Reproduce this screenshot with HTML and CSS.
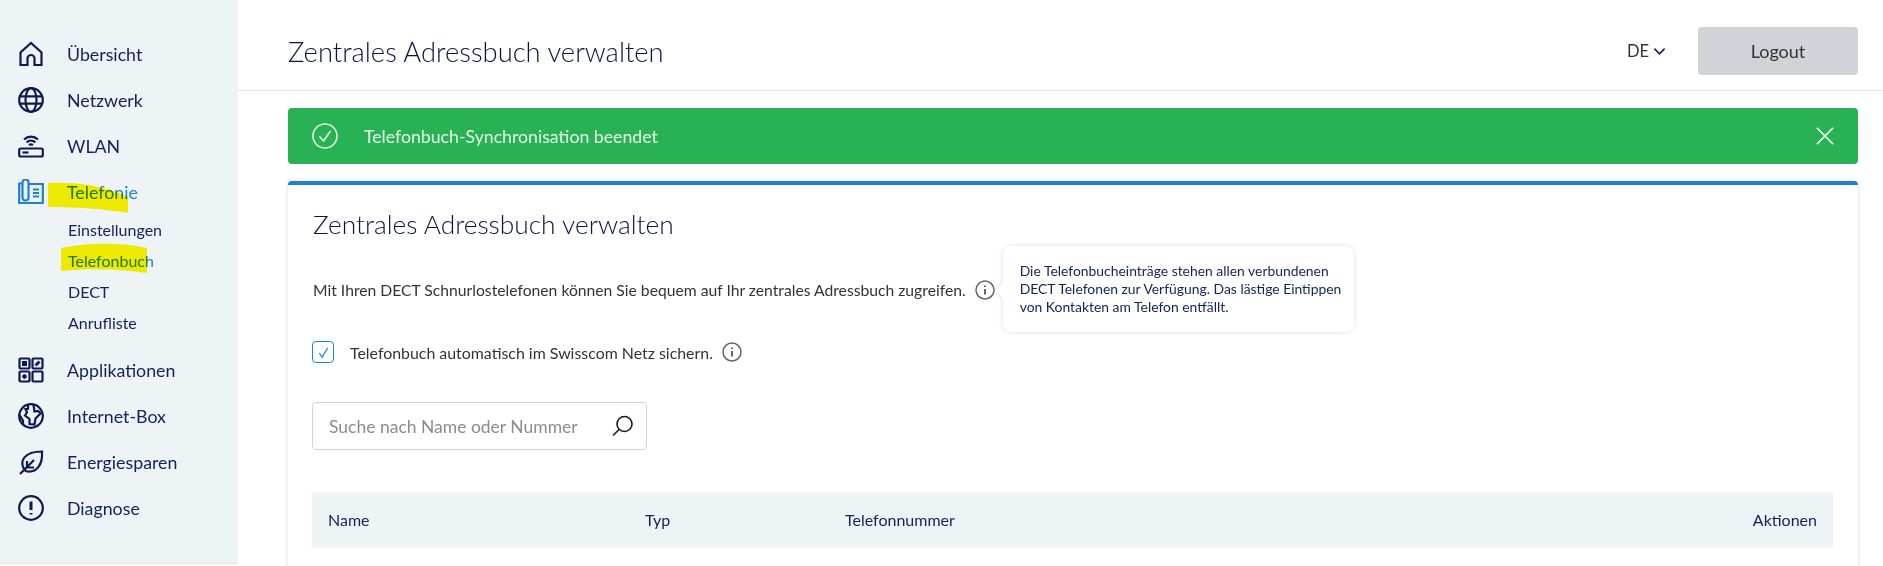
FILE: index.html
```html
<!DOCTYPE html>
<html lang="de">
<head>
<meta charset="UTF-8">
<meta name="viewport" content="width=device-width, initial-scale=1.0">
<title>Zentrales Adressbuch verwalten</title>
<link rel="stylesheet" href="styles.css">
</head>
<body>
    <div class="app">
        <nav class="sidebar">
            <a class="nav-item">
                <svg class="nav-icon" viewBox="0 0 26 26"><path d="M2.500 24V11.500L13 2l10.500 9.500V24h-7v-6.500a3.500 3.500 0 0 0-7 0V24z"/></svg>
                <span>Übersicht</span>
            </a>
            <a class="nav-item">
                <svg class="nav-icon" viewBox="0 0 26 26"><circle cx="13" cy="13" r="11.800"/><ellipse cx="13" cy="13" rx="5.500" ry="11.800"/><path d="M1.800 9.300h22.400M1.800 16.700h22.400"/></svg>
                <span>Netzwerk</span>
            </a>
            <a class="nav-item">
                <svg class="nav-icon" viewBox="0 0 26 26"><rect x="1.200" y="15.500" width="23.600" height="8" rx="1.500"/><path d="M4.500 19.500h6"/><path d="M6 6.500c4-3.800 10-3.800 14 0M8.600 9.400c2.600-2.300 6.200-2.300 8.800 0M11 12.200c1.200-.9 2.800-.9 4 0"/></svg>
                <span>WLAN</span>
            </a>
            <a class="nav-item active">
                <svg class="nav-icon" viewBox="0 0 26 26"><path d="M4.500 4.500H1.200v19.500h23.600V5H10.500"/><path d="M4.500 3.500a3 3 0 0 1 6 0v15a3 3 0 0 1-6 0z"/><path d="M15 10.500h6M15 14h6M15 17.500h6"/></svg>
                <span>Telefonie</span>
                <svg class="marker marker-main" viewBox="0 0 80 32"><path d="M0 1C18 0 52 1 80 15v16C55 27 30 25 0 25z"/></svg>
            </a>
            <div class="sub-nav">
                <a class="sub-item">Einstellungen</a>
                <a class="sub-item active">Telefonbuch
                    <svg class="marker marker-sub" viewBox="0 0 86 30"><path d="M0 5C25 0 60-1 86 5v25C60 26 30 25 0 28z"/></svg>
                </a>
                <a class="sub-item">DECT</a>
                <a class="sub-item">Anrufliste</a>
            </div>
            <a class="nav-item">
                <svg class="nav-icon" viewBox="0 0 26 26"><rect x="1.500" y="1.500" width="10" height="10" rx="1"/><rect x="14.500" y="1.500" width="10" height="10" rx="1"/><rect x="1.500" y="14.500" width="10" height="10" rx="1"/><rect x="14.500" y="14.500" width="10" height="10" rx="1"/><path class="thick" d="M5.500 5.500h2v2h-2zM17.500 8.500l4-4M5 18l3 3M8 18l-3 3"/></svg>
                <span>Applikationen</span>
            </a>
            <a class="nav-item">
                <svg class="nav-icon" viewBox="0 0 26 26"><circle cx="13" cy="13" r="11.800"/><path d="M10 1.500V6H7.500L9 9.500l-2 3 4.500 3.500v5l5 .5 1-6 5-5-2.500-2.500-3.500.5-1-6.500"/><path d="M1.500 12l3.500 5.500V22"/></svg>
                <span>Internet-Box</span>
            </a>
            <a class="nav-item">
                <svg class="nav-icon" viewBox="0 0 26 26"><path d="M5.500 19C2 12 6 2.500 24 2.500c1 14-6 21-14.500 20-1.500-.2-3-1.500-4-3.500z"/><path d="M2 25l14-14M9 12v6.500h7"/></svg>
                <span>Energiesparen</span>
            </a>
            <a class="nav-item">
                <svg class="nav-icon" viewBox="0 0 26 26"><circle cx="13" cy="13" r="11.800"/><path class="thick" d="M13 6.500v8.500M13 18v1.500"/></svg>
                <span>Diagnose</span>
            </a>
        </nav>

        <div class="main">
            <header class="topbar">
                <h1 class="page-title">Zentrales Adressbuch verwalten</h1>
                <div class="lang">DE
                    <svg class="chevron" viewBox="0 0 14 9"><path d="M1.500 1.500L7 7l5.500-5.500"/></svg>
                </div>
                <button class="logout-btn">Logout</button>
            </header>

            <div class="content">
                <div class="alert">
                    <svg class="alert-icon" viewBox="0 0 26 26"><circle cx="13" cy="13" r="12"/><path d="M7.500 13.500l4 4.500 7-10"/></svg>
                    <span class="alert-text">Telefonbuch-Synchronisation beendet</span>
                    <svg class="alert-close" viewBox="0 0 20 20"><path d="M1 1l18 18M19 1L1 19"/></svg>
                </div>

                <section class="card">
                    <h2 class="card-title">Zentrales Adressbuch verwalten</h2>

                    <div class="info-row">
                        <span>Mit Ihren DECT Schnurlostelefonen können Sie bequem auf Ihr zentrales Adressbuch zugreifen.</span>
                        <span class="info-wrap">
                            <svg class="info-icon" viewBox="0 0 20 20"><circle cx="10" cy="10" r="9"/><path class="thick" d="M10 9v5.500M10 5.500v1.500"/></svg>
                            <div class="tooltip">Die Telefonbucheinträge stehen allen verbundenen DECT Telefonen zur Verfügung. Das lästige Eintippen von Kontakten am Telefon entfällt.</div>
                        </span>
                    </div>

                    <div class="check-row">
                        <span class="checkbox">
                            <svg viewBox="0 0 14 14"><path d="M2.500 7.500l3 4.500 6-10"/></svg>
                        </span>
                        <span>Telefonbuch automatisch im Swisscom Netz sichern.</span>
                        <svg class="info-icon" viewBox="0 0 20 20"><circle cx="10" cy="10" r="9"/><path class="thick" d="M10 9v5.500M10 5.500v1.500"/></svg>
                    </div>

                    <div class="search">
                        <span class="search-text">Suche nach Name oder Nummer</span>
                        <svg class="search-icon" viewBox="0 0 22 22"><circle cx="12.500" cy="9" r="7.500"/><path d="M7 14.500l-6 6"/></svg>
                    </div>

                    <div class="table-head">
                        <span class="col-name">Name</span>
                        <span class="col-type">Typ</span>
                        <span class="col-number">Telefonnummer</span>
                        <span class="col-actions">Aktionen</span>
                    </div>
                </section>
            </div>
        </div>
    </div>
</body>
</html>
```

FILE: styles.css
```css
html, body {
    margin: 0;
    padding: 0;
    height: 100%;
    overflow: hidden;
}

body {
    font-family: "Lato", "Liberation Sans", sans-serif;
    color: #1a2a5a;
    background-color: #fff;
}

.app {
    display: flex;
    height: 566px;
}

/* sidebar */
.sidebar {
    width: 238px;
    height: 564px;
    flex-shrink: 0;
    box-sizing: border-box;
    padding-top: 31px;
    background-color: #eef3f6;
    border-bottom: 1px solid #dde2e6;
}

.nav-item {
    display: flex;
    align-items: center;
    position: relative;
    height: 46px;
    padding-left: 18px;
    font-size: 17.800px;
    color: #14215a;
}

.nav-item.active {
    color: #1f7fd6;
}

.nav-icon {
    width: 26px;
    height: 26px;
    margin-right: 23px;
    fill: none;
    stroke: #0f1b50;
    stroke-width: 2.200;
}

.nav-item.active .nav-icon {
    stroke: #1f7fd6;
}

.thick {
    stroke-width: 3;
}

.sub-nav {
    margin-top: -1px;
    padding: 0 0 9px 68px;
}

.sub-item {
    display: flex;
    align-items: center;
    position: relative;
    height: 31px;
    font-size: 16px;
    color: #14215a;
}

.sub-item.active {
    color: #1f7fd6;
}

.marker {
    position: absolute;
    fill: #fff500;
    mix-blend-mode: multiply;
}

.marker-main {
    left: 48px;
    top: 13px;
    width: 80px;
    height: 32px;
}

.marker-sub {
    left: -7px;
    top: -2px;
    width: 86px;
    height: 30px;
}

/* header */
.main {
    flex: 1;
    min-width: 0;
}

.topbar {
    display: flex;
    align-items: center;
    height: 91px;
    box-sizing: border-box;
    padding: 12px 25px 0 50px;
    border-bottom: 1px solid #e4e4e4;
}

.page-title {
    flex: 1;
    margin: 0;
    font-size: 27.400px;
    font-weight: 300;
    color: #0a1440;
}

.lang {
    display: flex;
    align-items: center;
    gap: 4px;
    margin-right: 32px;
    font-size: 16.500px;
    color: #333;
}

.chevron {
    width: 13px;
    height: 9px;
    fill: none;
    stroke: #14215a;
    stroke-width: 1.800;
}

.logout-btn {
    width: 160px;
    height: 48px;
    border: none;
    border-radius: 4px;
    background-color: #d0d4d8;
    color: #333;
    font-family: inherit;
    font-size: 18px;
}

/* content */
.content {
    padding: 17px 25px 0 50px;
}

.alert {
    display: flex;
    align-items: center;
    height: 56px;
    padding: 0 24px;
    border-radius: 4px;
    background-color: #28b254;
    color: #e4f8e8;
}

.alert-icon {
    width: 26px;
    height: 26px;
    margin-right: 26px;
    fill: none;
    stroke: #e4f8e8;
    stroke-width: 1.600;
}

.alert-text {
    flex: 1;
    font-size: 17.700px;
}

.alert-close {
    width: 18px;
    height: 18px;
    fill: none;
    stroke: #e4f8e8;
    stroke-width: 1.800;
}

.card {
    margin-top: 17px;
    padding: 0 25px 0 24px;
    height: 400px;
    border-top: 4px solid #1f7fd6;
    border-radius: 4px 4px 0 0;
    box-shadow: 0 0 4px rgba(0, 0, 0, 0.15);
}

.card-title {
    margin: 0 0 0 1px;
    padding-top: 19px;
    height: 40px;
    line-height: 40px;
    font-size: 26.300px;
    font-weight: 300;
    color: #0a1440;
}

.info-row {
    display: flex;
    align-items: center;
    margin: 28px 0 0 1px;
    height: 36px;
    font-size: 15.700px;
    color: #333;
}

.info-wrap {
    position: relative;
    display: flex;
    margin-left: 9px;
}

.info-icon {
    width: 20px;
    height: 20px;
    fill: none;
    stroke: #666;
    stroke-width: 1.500;
}

.info-icon .thick {
    stroke-width: 2;
}

.tooltip {
    position: absolute;
    left: 28px;
    top: -34px;
    width: 351px;
    box-sizing: border-box;
    padding: 16px 4px 16px 17px;
    border-radius: 8px;
    background-color: #fff;
    box-shadow: 0 0 5px rgba(0, 0, 0, 0.13);
    font-size: 13.900px;
    line-height: 18px;
    color: #14215a;
}

.tooltip::before {
    content: "";
    position: absolute;
    left: -6px;
    top: 39px;
    width: 11px;
    height: 11px;
    background-color: #fff;
    box-shadow: -1px 1px 2px rgba(0, 0, 0, 0.1);
    transform: rotate(45deg);
}

.check-row {
    display: flex;
    align-items: center;
    margin-top: 32px;
    height: 24px;
    font-size: 15.900px;
    color: #333;
}

.check-row .info-icon {
    margin-left: 9px;
}

.checkbox {
    display: flex;
    align-items: center;
    justify-content: center;
    width: 22px;
    height: 22px;
    margin-right: 16px;
    box-sizing: border-box;
    border: 1.500px solid #1f7fd6;
    border-radius: 4px;
}

.checkbox svg {
    width: 13px;
    height: 13px;
    fill: none;
    stroke: #1f7fd6;
    stroke-width: 1.200;
}

.search {
    display: flex;
    align-items: center;
    justify-content: space-between;
    width: 335px;
    height: 48px;
    margin-top: 38px;
    box-sizing: border-box;
    padding: 0 12px 0 16px;
    border: 1px solid #d0d4d8;
    border-radius: 4px;
    font-size: 17.500px;
    color: #8c8c8c;
}

.search-icon {
    width: 22px;
    height: 22px;
    fill: none;
    stroke: #1a1a1a;
    stroke-width: 1.600;
}

.table-head {
    display: flex;
    align-items: center;
    height: 56px;
    box-sizing: border-box;
    margin-top: 42px;
    padding: 0 16px 2px;
    background-color: #eef3f6;
    font-size: 16px;
    color: #14215a;
}

.col-name {
    width: 317px;
}

.col-type {
    width: 200px;
}

.col-number {
    flex: 1;
}
```
